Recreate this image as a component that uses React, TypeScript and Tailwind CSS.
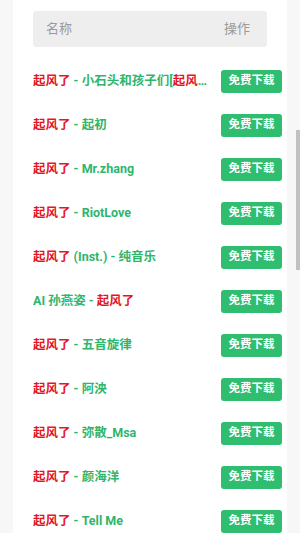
const RED = "text-[#e5161d]";
const GREEN = "text-[#2fb56c]";

type Part = { t: string; hl?: boolean };

const songs: Part[][] = [
  [{ t: "起风了", hl: true }, { t: " - 小石头和孩子们[" }, { t: "起风了", hl: true }, { t: "]" }],
  [{ t: "起风了", hl: true }, { t: " - 起初" }],
  [{ t: "起风了", hl: true }, { t: " - Mr.zhang" }],
  [{ t: "起风了", hl: true }, { t: " - RiotLove" }],
  [{ t: "起风了", hl: true }, { t: " (Inst.) - 纯音乐" }],
  [{ t: "AI 孙燕姿 - " }, { t: "起风了", hl: true }],
  [{ t: "起风了", hl: true }, { t: " - 五音旋律" }],
  [{ t: "起风了", hl: true }, { t: " - 阿泱" }],
  [{ t: "起风了", hl: true }, { t: " - 弥散_Msa" }],
  [{ t: "起风了", hl: true }, { t: " - 颜海洋" }],
  [{ t: "起风了", hl: true }, { t: " - Tell Me" }],
];

export default function App() {
  return (
    <div
      className="relative h-[533px] w-[300px] overflow-hidden bg-[#f7f7f7]"
      style={{ fontFamily: 'Roboto, "Noto Sans CJK SC", sans-serif' }}
    >
      <div className="mx-[13px] h-full bg-white pt-[11px]">
        <div className="mx-5 flex h-9 items-center justify-between rounded-[3px] bg-[#eeeeee] pl-[13px] pr-[17px] text-[13px] text-[#9a9a9a]">
          <span>名称</span>
          <span>操作</span>
        </div>
        <ul className="mt-3 pl-5 pr-[5px]">
          {songs.map((parts, i) => (
            <li key={i} className="flex h-11 items-center">
              <div className={`mr-[11px] min-w-0 flex-1 truncate text-[12.5px] font-bold ${GREEN}`}>
                {parts.map((p, j) => (
                  <span key={j} className={p.hl ? RED : GREEN}>
                    {p.t}
                  </span>
                ))}
              </div>
              <button className="flex h-[23px] w-[61px] shrink-0 items-center justify-center rounded-[3px] bg-[#2fbd6f] text-[11.5px] font-bold text-white">
                免费下载
              </button>
            </li>
          ))}
        </ul>
      </div>
      <div className="absolute right-0 top-[130px] h-[140px] w-1 bg-[#c1c1c1]" />
    </div>
  );
}
